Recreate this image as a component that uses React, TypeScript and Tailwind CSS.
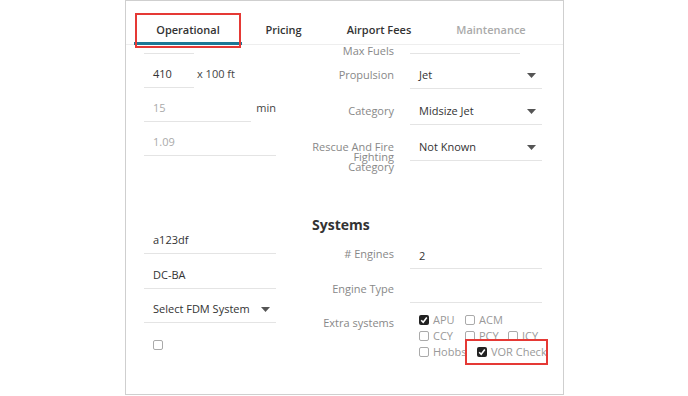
import type { ReactNode } from 'react';

const Caret = () => (
    <svg width="9" height="5" viewBox="0 0 9 5" className="shrink-0">
        <path d="M0 0 L9 0 L4.5 5 Z" fill="#555" />
    </svg>
);

const Field = ({ className, children, select }: { className: string; children?: ReactNode; select?: boolean }) => (
    <div className={`h-[27px] border-b border-[#e4e4e4] flex items-center justify-between pl-[9px] pr-[6px] ${className}`}>
        <span>{children}</span>
        {select && <Caret />}
    </div>
);

const Box = ({ checked }: { checked?: boolean }) =>
    checked ? (
        <div className="w-[10px] h-[10px] rounded-[2px] bg-[#222] flex items-center justify-center shrink-0">
            <svg width="8" height="8" viewBox="0 0 8 8">
                <path d="M1.2 4.2 L3.2 6.2 L6.8 1.6" stroke="#fff" strokeWidth="1.6" fill="none" />
            </svg>
        </div>
    ) : (
        <div className="w-[10px] h-[10px] rounded-[2px] border border-[#aaa] bg-white shrink-0"></div>
    );

const Check = ({ label, checked, className }: { label: string; checked?: boolean; className?: string }) => (
    <div className={`flex items-center gap-[4px] h-[16px] ${className ?? ''}`}>
        <Box checked={checked} />
        <span className="text-[#999]">{label}</span>
    </div>
);

const Row = ({ label, children, className, labelClass }: { label: ReactNode; children?: ReactNode; className?: string; labelClass?: string }) => (
    <div className={`flex gap-[16px] ${className ?? ''}`}>
        <div className={`w-[94px] text-right text-[#888] shrink-0 ${labelClass ?? 'h-[27px] leading-[26px]'}`}>{label}</div>
        {children}
    </div>
);

const tabs = [
    { name: 'Operational', w: 'w-[108px]', active: true },
    { name: 'Pricing', w: 'w-[83px]' },
    { name: 'Airport Fees', w: 'w-[108px]' },
    { name: 'Maintenance', w: 'w-[116px]', muted: true },
];

export default function App() {
    return (
        <div className="w-[688px] h-[396px] bg-white relative font-['Open_Sans',sans-serif] text-[11px] text-[#333]">
            <div className="ml-[125px] w-[439px] h-[395px] border border-[#cfcfcf] flex flex-col">
                <div className="h-[44px] border-b border-[#eeeeee] flex pl-[8px] shrink-0 relative z-10 bg-white">
                    {tabs.map((tab) => (
                        <div
                            key={tab.name}
                            className={`${tab.w} h-[44px] -mb-px pt-[18px] flex items-center justify-center font-semibold border-b-[3px] ${tab.active ? 'border-[#1d7896]' : 'border-transparent'} ${tab.muted ? 'text-[#aaa]' : 'text-[#333]'}`}
                        >
                            {tab.name}
                        </div>
                    ))}
                </div>

                <div className="flex-1 overflow-hidden">
                    <div className="-mt-[18px] flex">
                        {/* left column */}
                        <div className="ml-[18px] w-[132px] flex flex-col shrink-0">
                            <Field className="w-[50px]" />
                            <div className="mt-[7px] flex items-start gap-[3px]">
                                <Field className="w-[50px]">410</Field>
                                <span className="leading-[26px] text-[#444]">x 100 ft</span>
                            </div>
                            <div className="mt-[7px] flex items-start gap-[5px]">
                                <Field className="w-[108px] text-[#aaa]">15</Field>
                                <span className="leading-[26px] text-[#444]">min</span>
                            </div>
                            <Field className="mt-[7px] w-[132px] text-[#aaa]">1.09</Field>
                            <Field className="mt-[71px] w-[132px]">a123df</Field>
                            <Field className="mt-[8px] w-[132px]">DC-BA</Field>
                            <Field className="mt-[7px] w-[132px]" select>Select FDM System</Field>
                            <div className="mt-[17px] pl-[9px]">
                                <Box />
                            </div>
                        </div>

                        {/* right column */}
                        <div className="ml-[24px] flex flex-col">
                            <Row label="Max Fuels" labelClass="h-[27px] pt-[19px] leading-[10px]">
                                <Field className="w-[110px]" />
                            </Row>
                            <Row label="Propulsion" className="mt-[8px]">
                                <Field className="w-[132px]" select>Jet</Field>
                            </Row>
                            <Row label="Category" className="mt-[9px]">
                                <Field className="w-[132px]" select>Midsize Jet</Field>
                            </Row>
                            <Row
                                label={<>Rescue And Fire<br />Fighting<br />Category</>}
                                className="mt-[9px] items-start"
                                labelClass="pt-[8px] leading-[10px]"
                            >
                                <Field className="w-[132px]" select>Not Known</Field>
                            </Row>
                            <div className="mt-[43px] h-[20px] leading-[20px] pl-[12px] text-[14px] font-bold text-[#333]">Systems</div>
                            <Row label="# Engines" className="mt-[7px]" labelClass="h-[27px] leading-[24px]">
                                <Field className="w-[132px] pt-[3px]">2</Field>
                            </Row>
                            <Row label="Engine Type" className="mt-[7px]">
                                <Field className="w-[132px]" />
                            </Row>
                            <Row label="Extra systems" className="mt-[9px]" labelClass="pt-[3px] leading-[16px]">
                                <div className="pl-[9px] flex flex-col">
                                    <div className="flex">
                                        <Check label="APU" checked className="w-[46px]" />
                                        <Check label="ACM" />
                                    </div>
                                    <div className="flex">
                                        <Check label="CCY" className="w-[46px]" />
                                        <Check label="PCY" className="w-[43px]" />
                                        <Check label="ICY" />
                                    </div>
                                    <div className="flex">
                                        <Check label="Hobbs" className="w-[58px]" />
                                        <Check label="VOR Check" checked />
                                    </div>
                                </div>
                            </Row>
                        </div>
                    </div>
                </div>
            </div>

            {/* annotation boxes */}
            <div className="absolute z-20 left-[135px] top-[13px] w-[106px] h-[35px] border-2 border-[#e53935]"></div>
            <div className="absolute z-20 left-[465px] top-[339px] w-[83px] h-[26px] border-2 border-[#e53935]"></div>
        </div>
    );
}
